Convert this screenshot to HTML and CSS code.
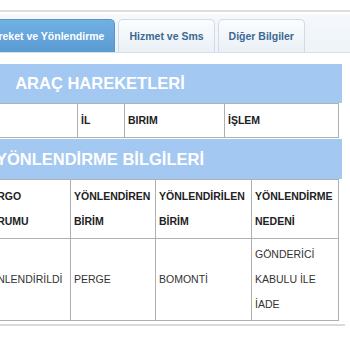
FILE: index.html
```html
<!DOCTYPE html>
<html lang="tr">
<head>
    <meta charset="UTF-8">
    <meta name="viewport" content="width=device-width, initial-scale=1.0">
    <title>Gönderi Detayı</title>
    <link rel="stylesheet" href="styles.css">
</head>
<body>
    <div class="tabbar">
        <div class="tabstrip">
            <ul class="tabs">
                <li class="tab active">Hareket ve Yönlendirme</li>
                <li class="tab">Hizmet ve Sms</li>
                <li class="tab">Diğer Bilgiler</li>
            </ul>
        </div>
    </div>

    <div class="content">
        <div class="section">
            <h3 class="section-title">ARAÇ HAREKETLERİ</h3>
            <table class="grid">
                <colgroup>
                    <col style="width: 219px">
                    <col style="width: 47px">
                    <col style="width: 100px">
                    <col style="width: 114px">
                </colgroup>
                <tr>
                    <th></th>
                    <th>İL</th>
                    <th>BIRIM</th>
                    <th>İŞLEM</th>
                </tr>
            </table>
        </div>

        <div class="section">
            <h3 class="section-title">YÖNLENDİRME BİLGİLERİ</h3>
            <table class="grid">
                <colgroup>
                    <col style="width: 120px">
                    <col style="width: 92px">
                    <col style="width: 85px">
                    <col style="width: 96px">
                    <col style="width: 87px">
                </colgroup>
                <tr>
                    <th></th>
                    <th>KARGO DURUMU</th>
                    <th>YÖNLENDİREN BİRİM</th>
                    <th>YÖNLENDİRİLEN BİRİM</th>
                    <th>YÖNLENDİRME NEDENİ</th>
                </tr>
                <tr>
                    <td></td>
                    <td>YÖNLENDİRİLDİ</td>
                    <td>PERGE</td>
                    <td>BOMONTİ</td>
                    <td>GÖNDERİCİ KABULU İLE İADE</td>
                </tr>
            </table>
        </div>
        <div class="bottom-line"></div>
    </div>
</body>
</html>
```

FILE: styles.css
```css
body {
    margin: 0;
    padding-top: 10px;
    font-family: "Liberation Sans", Arial, sans-serif;
    background-color: #fff;
    overflow: hidden;
}

.tabbar {
    border-top: 2px solid #dedede;
    padding-top: 2px;
}

.tabstrip {
    background: linear-gradient(#f6f9fc, #edf3f8);
    border-bottom: 1px solid #d6e1eb;
    padding-top: 5px;
}

.tabs {
    display: flex;
    gap: 3px;
    list-style: none;
    margin: 0 0 0 -26px;
    padding: 0;
}

.tab {
    height: 33px;
    line-height: 33px;
    padding: 0 10px;
    font-size: 10.5px;
    font-weight: bold;
    color: #3b6994;
    white-space: nowrap;
    background: linear-gradient(#fbfdfe, #e9f0f6);
    border: 1px solid #cfdbe6;
    border-bottom: none;
    border-radius: 5px 5px 0 0;
    box-sizing: border-box;
}

.tab.active {
    color: #fff;
    background: linear-gradient(#72b1e4, #5a9bd3);
    border-color: #5894c9;
}

.content {
    margin-top: 11px;
    margin-left: -142px;
    width: 487px;
}

.section-title {
    margin: 0 3px 0 0;
    height: 39px;
    line-height: 39px;
    text-align: center;
    font-size: 16.5px;
    font-weight: bold;
    color: #fff;
    background-color: #a3c8f2;
}

.section + .section .section-title {
    height: 40px;
    line-height: 40px;
    margin-top: 1px;
}

.grid {
    width: 480px;
    table-layout: fixed;
    border-collapse: collapse;
}

.grid th,
.grid td {
    border: 1px solid #b0b0b0;
    padding: 4px 3px;
    line-height: 25px;
    font-size: 10.5px;
    text-align: left;
    vertical-align: middle;
    color: #222;
}

.grid th {
    font-weight: bold;
}

.grid td {
    padding: 3px 3px;
    color: #333;
}

.bottom-line {
    margin-top: 3px;
    border-top: 2px solid #dadada;
}
```
